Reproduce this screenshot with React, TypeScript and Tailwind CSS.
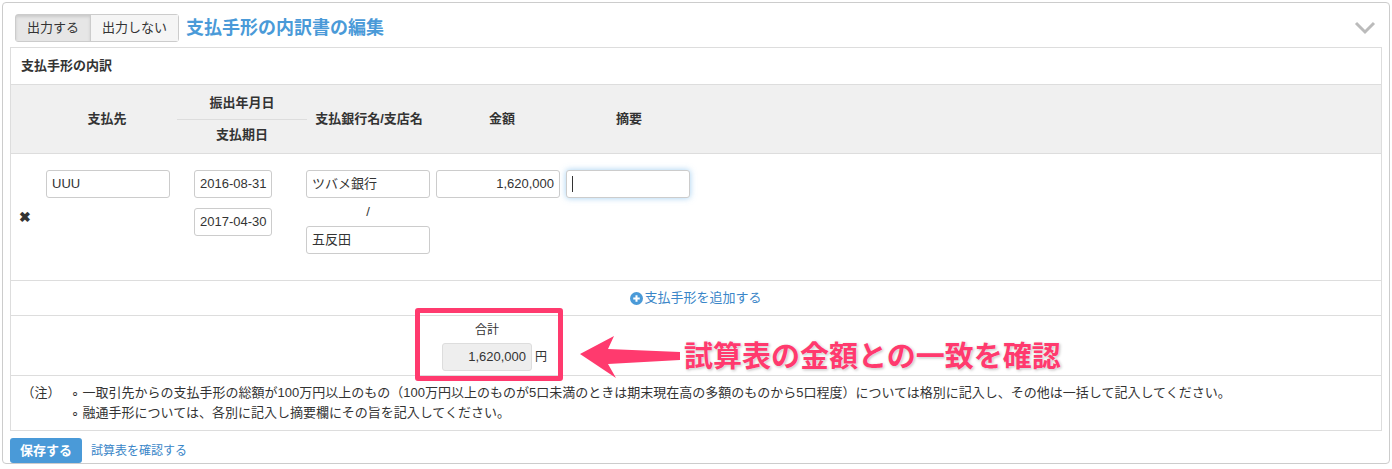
export default function App() {
  const font = { fontFamily: '"Liberation Sans", "Noto Sans CJK JP", sans-serif' };
  const input = 'h-[28px] border border-[#ccc] rounded-[3px] bg-white px-[5px] text-[13px] text-[#333] flex items-center whitespace-nowrap';
  return (
    <div className="w-[1392px] h-[469px] bg-white relative text-[#333] text-[12px]" style={font}>
      <div className="absolute left-[2px] top-[2px] w-[1388px] h-[462px] border border-[#ccc] rounded-[4px]" />
      <div className="relative pt-[14px] px-[10px]">
        <div className="flex items-center h-[28px] pl-[5px]">
          <div className="flex border border-[#ccc] rounded-[3px] h-[28px] text-[13px]">
            <div className="px-[11px] flex items-center bg-[#e6e6e6] shadow-[inset_0_2px_3px_rgba(0,0,0,0.12)] border-r border-[#ccc]">出力する</div>
            <div className="px-[11px] flex items-center bg-[#f5f5f5]">出力しない</div>
          </div>
          <div className="ml-[7px] text-[18px] font-bold text-[#4a9ad8]">支払手形の内訳書の編集</div>
          <svg className="ml-auto mr-[6px]" width="22" height="14" viewBox="0 0 22 14"><path d="M2 2l9 9 9-9" fill="none" stroke="#bbb" strokeWidth="3" /></svg>
        </div>
        <div className="mt-[5px] border border-[#ddd] w-[1372px]">
          <div className="h-[37px] flex items-center px-[10px] font-bold text-[13px] border-b border-[#ddd]">支払手形の内訳</div>
          <div className="h-[69px] bg-[#f0f0f0] border-b border-[#ddd] flex items-center font-bold text-[13px]">
            <div className="w-[36px]" />
            <div className="w-[124px] text-center ml-[-2px]">支払先</div>
            <div className="w-[130px] ml-[8px] flex flex-col items-center">
              <div className="h-[31px] flex items-center">振出年月日</div>
              <div className="w-full border-t border-[#ddd]" />
              <div className="h-[31px] flex items-center">支払期日</div>
            </div>
            <div className="w-[124px] text-center">支払銀行名/支店名</div>
            <div className="w-[130px] text-center ml-[6px]">金額</div>
            <div className="w-[124px] text-center">摘要</div>
          </div>
          <div className="h-[127px] border-b border-[#ddd] flex items-center relative">
            <div className="w-[36px] pl-[8px] text-[14px] font-bold">✖</div>
            <div className="self-start mt-[16px] w-[124px] ml-[-1px]"><div className={input}>UUU</div></div>
            <div className="self-start mt-[16px] ml-[24px] flex flex-col gap-[10px]">
              <div className={input + ' w-[78px] px-[4px]'}>2016-08-31</div>
              <div className={input + ' w-[78px] px-[4px]'}>2017-04-30</div>
            </div>
            <div className="self-start mt-[16px] ml-[34px] w-[124px] flex flex-col">
              <div className={input}>ツバメ銀行</div>
              <div className="text-center h-[28px] flex items-center justify-center text-[13px]">/</div>
              <div className={input}>五反田</div>
            </div>
            <div className="self-start mt-[16px] ml-[6px] w-[124px]"><div className={input + ' justify-end'}>1,620,000</div></div>
            <div className="self-start mt-[16px] ml-[6px] w-[124px]"><div className={input + ' border-[#66afe9] shadow-[0_0_6px_rgba(102,175,233,0.6)]'}><span className="w-px h-[16px] bg-[#333]" /></div></div>
          </div>
          <div className="h-[35px] border-b border-[#ddd] flex items-center justify-center text-[13px] text-[#3a86c8]">
            <svg width="13" height="13" viewBox="0 0 14 14" className="mr-[1px]"><circle cx="7" cy="7" r="7" fill="#4a9ad8" /><path d="M7 3.5v7M3.5 7h7" stroke="#fff" strokeWidth="2.2" /></svg>
            支払手形を追加する
          </div>
          <div className="h-[60px] border-b border-[#ddd] flex flex-col justify-center pl-[431px]">
            <div className="w-[90px] text-center text-[12px]">合計</div>
            <div className="flex items-center mt-[4px]">
              <div className="w-[90px] h-[28px] rounded-[3px] bg-[#eee] border border-[#ddd] flex items-center justify-end pr-[5px] text-[13px]">1,620,000</div>
              <span className="ml-[3px] text-[12px]">円</span>
            </div>
          </div>
          <div className="py-[7px] text-[13px] leading-[20px] flex">
            <div className="w-[60px] text-center">（注）</div>
            <div>
              <div>∘ 一取引先からの支払手形の総額が100万円以上のもの（100万円以上のものが5口未満のときは期末現在高の多額のものから5口程度）については格別に記入し、その他は一括して記入してください。</div>
              <div>∘ 融通手形については、各別に記入し摘要欄にその旨を記入してください。</div>
            </div>
          </div>
        </div>
        <div className="flex items-center mt-[7px] h-[25px]">
          <div className="h-[25px] px-[10px] bg-[#4a9ad8] text-white font-bold text-[13px] rounded-[3px] flex items-center">保存する</div>
          <div className="ml-[9px] text-[#3a86c8] text-[12px]">試算表を確認する</div>
        </div>
      </div>
      <div className="absolute left-[415px] top-[308px] w-[148px] h-[73px] border-[5px] border-[#ff3a6e] rounded-[3px]" />
      <svg className="absolute left-[578px] top-[334px]" width="104" height="46" viewBox="0 0 104 46">
        <path d="M2 20 L36 2 L30 15 L102 18 L102 26 L30 30 L38 44 Z" fill="#ff3a6e" />
      </svg>
      <div className="absolute left-[684px] top-[339px] text-[29px] leading-[36px] font-bold text-[#ff3a6e] whitespace-nowrap [text-shadow:0_0_2px_#fff,1px_1px_3px_rgba(0,0,0,0.3)]">試算表の金額との一致を確認</div>
    </div>
  );
}
